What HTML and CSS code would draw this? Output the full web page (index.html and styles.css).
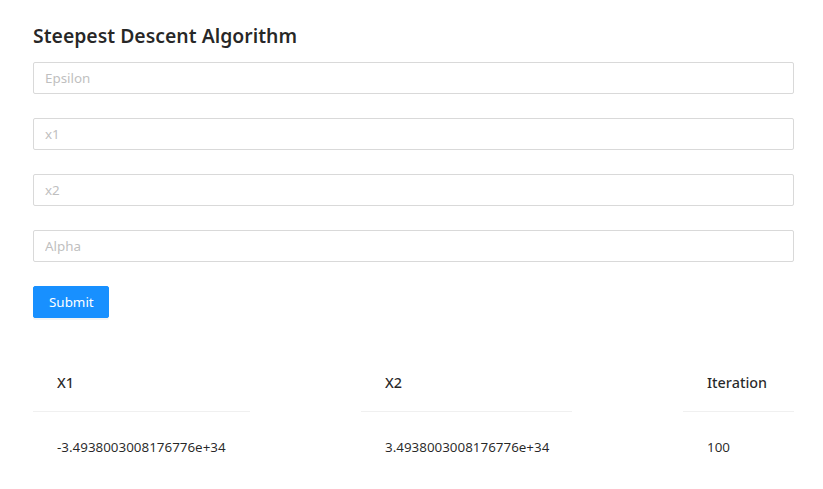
FILE: index.html
```html
<!DOCTYPE html>
<html lang="en">
<head>
<meta charset="utf-8">
<title>Steepest Descent Algorithm</title>
<link rel="stylesheet" href="styles.css">
</head>
<body>
<main class="page">
  <h1 class="title">Steepest Descent Algorithm</h1>
  <form class="form">
    <input class="field" type="text" placeholder="Epsilon">
    <input class="field" type="text" placeholder="x1">
    <input class="field" type="text" placeholder="x2">
    <input class="field" type="text" placeholder="Alpha">
    <button class="submit" type="button">Submit</button>
  </form>
  <div class="table">
    <div class="cell head">X1</div>
    <div class="cell head">X2</div>
    <div class="cell head">Iteration</div>
    <div class="cell body">-3.4938003008176776e+34</div>
    <div class="cell body">3.4938003008176776e+34</div>
    <div class="cell body">100</div>
  </div>
</main>
</body>
</html>
```

FILE: styles.css
```css
* { box-sizing: border-box; }
html, body { margin: 0; padding: 0; background: #fff; }
body {
  font-family: "Noto Sans", "Open Sans", sans-serif;
  font-size: 13.4px;
  color: rgba(0, 0, 0, 0.85);
}
.page {
  width: 761px;
  margin-left: 33px;
  padding-top: 22px;
}
.title {
  margin: 0 0 12px;
  font-size: 19.4px;
  font-weight: 600;
  line-height: 28px;
  color: rgba(0, 0, 0, 0.85);
}
.form {
  display: flex;
  flex-direction: column;
  align-items: flex-start;
  gap: 24px;
}
.field {
  width: 100%;
  height: 32px;
  padding: 4px 11px;
  border: 1px solid #d9d9d9;
  border-radius: 2px;
  font: inherit;
  color: rgba(0, 0, 0, 0.85);
  outline: none;
}
.field::placeholder { color: #bfbfbf; }
.submit {
  width: 76px;
  height: 32px;
  padding: 4px 15px;
  border: 1px solid #1890ff;
  border-radius: 2px;
  background: #1890ff;
  color: #fff;
  font: inherit;
  box-shadow: 0 2px 0 rgba(0, 0, 0, 0.045);
}
.table {
  margin-top: 38px;
  display: grid;
  grid-template-columns: 217px 211px 111px;
  column-gap: 111px;
}
.cell {
  padding: 16px 24px;
  line-height: 22px;
  white-space: nowrap;
}
.head {
  font-weight: 500;
  font-size: 14.4px;
  padding-bottom: 17px;
  border-bottom: 1px solid #f0f0f0;
}
.body {
  padding-top: 24px;
}
```
